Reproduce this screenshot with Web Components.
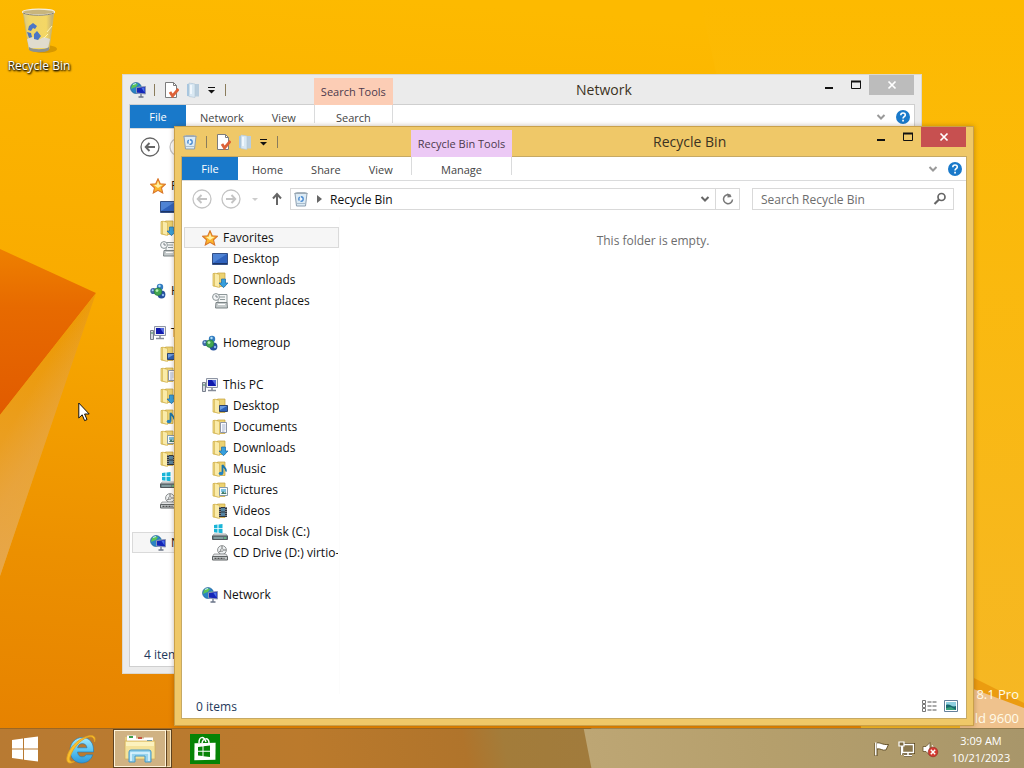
<!DOCTYPE html>
<html lang="en">
<head>
<meta charset="utf-8">
<title>Desktop</title>
<style>
    html, body {
        margin: 0;
        height: 100%;
        overflow: hidden;
    }
    body {
        font-family: "Open Sans", "Noto Sans", sans-serif;
        font-size: 12px;
        line-height: 17px;
        color: #111;
    }
    .empty {
        margin: 0;
        padding-top: 15px;
        text-align: center;
        color: #6d6d6d;
    }
</style>
</head>
<body>
<desk-top>
    <desk-shortcut icon="bin-large">Recycle Bin</desk-shortcut>

    <explorer-window style="left: 122px; top: 74px" caption="Network" icon="network" group="Search Tools"
        group-tab="Search" status="4 items" has-history>
        <button slot="tab">Network</button>
        <button slot="tab">View</button>
        <nav-tree slot="nav" selected="Network"></nav-tree>
    </explorer-window>

    <explorer-window active style="left: 174px; top: 126px" caption="Recycle Bin" icon="bin" group="Recycle Bin Tools"
        group-tab="Manage" status="0 items">
        <button slot="tab">Home</button>
        <button slot="tab">Share</button>
        <button slot="tab">View</button>
        <nav-tree slot="nav" selected="Favorites"></nav-tree>
        <p class="empty">This folder is empty.</p>
    </explorer-window>

    <task-bar slot="taskbar" time="3:09 AM" date="10/21/2023"></task-bar>
</desk-top>

<script>
const folder = `
    <path d="M1 1.500h5.500v13.500L1 14z" fill="#f3dc86" stroke="#c9a93f" stroke-width=".7"/>
    <path d="M5.500 1h7.500v13.500H5.500z" fill="#ecd272" stroke="#c4a03a" stroke-width=".7"/>
    <path d="M2.500 1l5 1.500v13l-5-1.500z" fill="#faeba8" stroke="#d0ae4c" stroke-width=".6"/>`;

const sheet = `
    <path d="M2.500 .5h8l3 3v12h-11z" fill="#fff" stroke="#7c7c7c"/>
    <path d="M10.500 .5v3h3" fill="none" stroke="#7c7c7c"/>
    <path d="M7 10l2.500 4 6-7" fill="none" stroke="#dd6138" stroke-width="2.800"/>`;

// name: [width, height, viewBox, markup]
const ICONS = {
    "network": [16, 16, "0 0 16 16", `
        <circle cx="6" cy="6" r="5.500" fill="#2b83c4" stroke="#1a5a94" stroke-width=".6"/>
        <path d="M2 3c2-2 4-2 6-1L6 5 3 6 1 7zM7 6l3-2 1 3-3 3-2 1z" fill="#5cc455"/>
        <path d="M3 2.500l3-1" stroke="#bfe9ff" stroke-width="1.200"/>
        <path d="M6.500 5.500l9-1v7.500l-9-1z" fill="#1426b8" stroke="#8d97b5"/>
        <path d="M11.500 6l3-.5v5z" fill="#4d73ea"/>
        <path d="M11 12v2.500M8.500 15h5" stroke="#6a7488" stroke-width="1.300"/>`],
    "star": [16, 16, "0 0 16 16", `
        <path d="M8 .8l2.200 4.900 5.200.5-3.900 3.600 1.200 5.200L8 12.300 3.300 15l1.200-5.200L.6 6.200l5.200-.5z" fill="#fbb62c" stroke="#d9762a" stroke-width="1.100"/>
        <path d="M8 3l1.300 3.800 3.200.3-4.500 3-4-3 2.800-.4z" fill="#fff0a8"/>`],
    "desktop": [16, 16, "0 0 16 16", `
        <path d="M.5 2.500h15v11H.5z" fill="#2f62bd" stroke="#334f86"/>
        <path d="M1 3h14L1 12z" fill="#4f83d4"/><path d="M1 12.500h14" stroke="#1b3568"/>`],
    "downloads": [16, 16, "0 0 16 16", folder + `
        <path d="M9.500 7h4v4H16l-4.500 4.700L7 11h2.500z" fill="#369fdc" stroke="#1c6aab" stroke-width=".7"/>`],
    "recent": [16, 16, "0 0 16 16", `
        <path d="M6 1.500h9v9H6z" fill="#f4f6f6" stroke="#8d9799"/>
        <path d="M8 4h5M8 6.500h5" stroke="#8e999b"/>
        <circle cx="4" cy="4" r="3.400" fill="#f5f7f8" stroke="#8b9496"/>
        <path d="M4 2v2h2" fill="none" stroke="#616b70" stroke-width=".8"/>
        <path d="M4 9.500h11l.5 5.500h-12z" fill="#c5cbcc" stroke="#7d8587"/>
        <path d="M6 11.500h7" stroke="#fff"/>`],
    "homegroup": [16, 16, "0 0 16 16", `
        <circle cx="10" cy="4" r="3.200" fill="#327cc1"/><circle cx="3.400" cy="8" r="3.100" fill="#4169a7"/>
        <circle cx="11.500" cy="11.500" r="3.900" fill="#244f9c"/>
        <circle cx="8" cy="8.700" r="3.800" fill="#43a650" stroke="#267b40" stroke-width=".7"/>
        <circle cx="7" cy="7.600" r="1.400" fill="#baf1b5"/><circle cx="9.500" cy="3" r="1.200" fill="#b3e0f5"/>
        <circle cx="2.700" cy="7.200" r="1" fill="#a9d4f4"/><circle cx="13" cy="12" r="1.200" fill="#8cb8ef"/>`],
    "pc": [16, 16, "0 0 16 16", `
        <path d="M.5 5.500h3v9h-3z" fill="#d5d9de" stroke="#787f8c"/><path d="M2 7v2" stroke="#3e885a"/>
        <path d="M4.500 1.500h11v9h-11z" fill="#eef0f4" stroke="#8e95a4"/>
        <path d="M6 3h8v6H6z" fill="#1019ad"/><path d="M10 3h4v6z" fill="#5268dd"/>
        <path d="M10 11v2M6 13.500h8" stroke="#858b99" stroke-width="1.500"/>`],
    "folder-desktop": [16, 16, "0 0 16 16", folder + `
        <path d="M7.500 7.500h8v6h-8z" fill="#2d61b9" stroke="#2e4570"/><path d="M8 8h7l-7 4z" fill="#6d9ce0"/>`],
    "documents": [16, 16, "0 0 16 16", folder + `
        <path d="M8.500 3.500h6v10h-6z" fill="#fcfcff" stroke="#8f97a8"/>
        <path d="M10 6h3.500M10 8h3.500M10 10h3.500M10 12h2.500" stroke="#8da0c0" stroke-width=".8"/>`],
    "music": [16, 16, "0 0 16 16", folder + `
        <path d="M10.500 12V4c1 2 4 3 3.500 6.500" fill="none" stroke="#1874ad" stroke-width="1.800"/>
        <ellipse cx="9" cy="12.500" rx="2.300" ry="1.800" fill="#2584c3"/>`],
    "pictures": [16, 16, "0 0 16 16", folder + `
        <path d="M7.500 5.500h8v8h-8z" fill="#f7fbfd" stroke="#889aa8"/>
        <path d="M9 7h5v3H9z" fill="#7cc1e2"/><path d="M9 12l2-3 1.500 2 1-1 1 2z" fill="#3e7d6c"/>`],
    "videos": [16, 16, "0 0 16 16", folder + `
        <path d="M7 4h8v10H7z" fill="#30343b"/><path d="M9 5h4v3.500H9zM9 9.500h4V13H9z" fill="#5585a3"/>
        <path d="M8 4v10M14 4v10" stroke="#ddd" stroke-width=".9" stroke-dasharray="1 1"/>`],
    "disk": [16, 16, "0 0 16 16", `
        <path d="M2 1l3.500-.5v3.700H2zM6.500.4l4-.4v4.200h-4zM2 5h3.500v3.700L2 8.300zM6.500 5h4v4.300l-4-.5z" fill="#19b5d8"/>
        <path d="M2 10h12l1.500 2H.5z" fill="#dde2e3" stroke="#899194" stroke-width=".7"/>
        <path d="M.5 12h15v3.500H.5z" fill="#668185" stroke="#50575c"/><path d="M2 14h9" stroke="#9fb6b9"/><path d="M12 14h2" stroke="#67e17b"/>`],
    "cd": [16, 16, "0 0 16 16", `
        <circle cx="10" cy="5" r="4.400" fill="#edf0f1" stroke="#8d9192"/><circle cx="10" cy="5" r="1.400" fill="#fff" stroke="#8d9192"/>
        <path d="M10 1v2M7 7l2-1M12 5h2" stroke="#777"/>
        <path d="M2 9h12l1.500 2.500H.5z" fill="#e2e4e5" stroke="#7d8082" stroke-width=".7"/>
        <path d="M.5 11.500h15v3.500H.5z" fill="#c3c7c8" stroke="#5f6364"/><path d="M2.500 13.300h10" stroke="#333" stroke-dasharray="2 1"/>`],
    "bin": [16, 16, "0 0 16 16", `
        <path d="M2 2.500h12L12.500 15h-9z" fill="#dcebf5" stroke="#8d9fb0"/>
        <path d="M1.500 2.500l2-1h9l2 1z" fill="#f7fafc" stroke="#93a1ac" stroke-width=".8"/>
        <circle cx="8" cy="8" r="2.200" fill="#eef6fc" stroke="#4a8bd2" stroke-width="1.400" stroke-dasharray="3.600 1"/>
        <path d="M4 12.500h8" stroke="#aabdcc"/>`],
    "sheet": [16, 16, "0 0 16 16", sheet],
    "new-folder": [16, 16, "0 0 16 16", `
        <path d="M2 2l6-.5v13L2 14z" fill="#a7c6e0"/><path d="M8 2h6v12.500H8z" fill="#b9cddd"/>
        <path d="M4 1l6 1v13.500l-6-1z" fill="#d9e8f3" stroke="#b4c6d5" stroke-width=".6"/><path d="M6 3v9" stroke="#f7fbff" stroke-width="1.600"/>`],
    "customize": [8, 8, "0 0 8 8", `<path d="M0 1.500h7" stroke="#111"/><path d="M0 4h7L3.500 7.500z" fill="#111"/>`],
    "minimize": [10, 10, "0 0 10 10", `<path d="M1 8h8" stroke="#111" stroke-width="2"/>`],
    "maximize": [10, 10, "0 0 10 10", `<path d="M.5 1.500h9v7h-9z" fill="none" stroke="#111"/><path d="M0 1.500h10" stroke="#111" stroke-width="2"/>`],
    "close": [10, 10, "0 0 10 10", `<path d="M1.500 1.500l7 7M8.500 1.500l-7 7" stroke="#fff" stroke-width="1.700"/>`],
    "chevron": [10, 8, "0 0 10 8", `<path d="M1.500 2L5 5.500 8.500 2" fill="none" stroke="currentColor" stroke-width="2"/>`],
    "help": [14, 14, "0 0 14 14", `<circle cx="7" cy="7" r="7" fill="#1979ca"/>
        <path d="M4.800 5.200C4.800 2.300 9.300 2.300 9.300 5c0 1.700-2.300 1.700-2.300 3.600" fill="none" stroke="#fff" stroke-width="1.600"/><path d="M6.200 9.800h1.700v1.700H6.200z" fill="#fff"/>`],
    "back": [20, 20, "0 0 20 20", `<circle cx="10" cy="10" r="9" fill="none" stroke="currentColor" stroke-width="1.300"/>
        <path d="M15 10H6M9.500 6L5.700 10l3.800 4" fill="none" stroke="currentColor" stroke-width="1.900"/>`],
    "forward": [20, 20, "0 0 20 20", `<circle cx="10" cy="10" r="9" fill="none" stroke="currentColor" stroke-width="1.300"/>
        <path d="M5 10h9M10.500 6l3.800 4-3.800 4" fill="none" stroke="currentColor" stroke-width="1.900"/>`],
    "tick": [6, 4, "0 0 6 4", `<path d="M0 1h6L3 4z" fill="#ccc"/>`],
    "up": [12, 14, "0 0 12 14", `<path d="M6 13V2M2 6.500L6 2l4 4.500" fill="none" stroke="#666" stroke-width="2"/>`],
    "crumb": [5, 8, "0 0 5 8", `<path d="M0 0l5 4-5 4z" fill="#666"/>`],
    "refresh": [12, 12, "0 0 12 12", `<path d="M8.800 2.700A4.500 4.500 0 1 0 10.500 6.500" fill="none" stroke="#777" stroke-width="1.500"/><path d="M5.500 0v4.500L9.800 4z" fill="#777"/>`],
    "search": [14, 14, "0 0 14 14", `<circle cx="8.500" cy="5" r="3.500" fill="none" stroke="#666" stroke-width="1.700"/><path d="M6 7.500L1.500 12" stroke="#666" stroke-width="2.200"/>`],
    "details": [16, 14, "0 0 16 14", `
        <path d="M1.500 1.500h3v3h-3zM1.500 5.500h3v3h-3zM1.500 9.500h3v3h-3z" fill="#fff" stroke="#777"/>
        <path d="M6.500 3h4M11.500 3h4M6.500 7h4M11.500 7h4M6.500 11h4M11.500 11h4" stroke="#555"/>`],
    "thumbs": [14, 12, "0 0 14 12", `<path d="M.5.5h13v11H.5z" fill="#fff" stroke="#65809b"/>
        <path d="M2 2h10v8H2z" fill="#8fd0e0"/><path d="M2 5c4-2 6 3 10 1v4H2z" fill="#16686e"/><path d="M2 8l5-1 5 3H2z" fill="#39a27e"/>`],
    "start": [28, 26, "0 0 28 26", `<path d="M1 4l11-1.500v10H1zM13 2.300L27 .500v12H13zM1 13.500h11v10L1 22zM13 13.500h14v12l-14-1.800z" fill="#fff"/>`],
    "ie": [32, 32, "0 0 32 32", `
        <defs><linearGradient id="e" x2="0" y2="1"><stop stop-color="#a4e9ff"/><stop offset=".5" stop-color="#5cc6f3"/><stop offset="1" stop-color="#2f98d8"/></linearGradient></defs>
        <path d="M28.500 19H12.500c.3 3.200 2.200 4.800 4.600 4.800 2 0 3.200-.8 4-2h6.600c-1.500 5-5.700 8.200-10.900 8.200C10.200 30 5 25 5 17.500S10.500 4.500 17.200 4.500c7.300 0 12 5.500 11.300 14.500zM12.600 14.800h9.400c-.3-2.700-2.300-4.200-4.700-4.200s-4.100 1.500-4.700 4.200z" fill="url(#e)" stroke="#1f78b8" stroke-width=".6"/>
        <path d="M29.500 9c2-5-1-8-8-5.500C12 6.500 3.500 16 2 24c-1 5.500 2 8 7.500 4.500-4 1-5.500-1-4.500-4.500C8 15 15 7.500 22 4.500c4-1.700 7.500-.5 7.500 4.500z" fill="#fbc02c" stroke="#e0a020" stroke-width=".8"/>`],
    "explorer": [32, 30, "0 0 32 30", `
        <path d="M1 3h8l1 3h20v16H1z" fill="#e6cd7e"/>
        <path d="M3 1.500h9v3h8v-1h9v5H3z" fill="#fff"/>
        <path d="M5 2h4v2H5z" fill="#399f4b"/><path d="M14 3h4v2h-4z" fill="#c75843"/><path d="M23 6h5v2h-5z" fill="#4491c9"/>
        <path d="M1 7h30v18H1z" fill="#f4e29a" stroke="#d1ae58" stroke-width=".7"/><path d="M2 8h28v4H2z" fill="#fcf2be"/>
        <path d="M5 28V18q0-2 2-2h18q2 0 2 2v10h-6v-6H11v6z" fill="#97d3ee" stroke="#4798c4"/>
        <path d="M7 27v-8h18v8" fill="none" stroke="#e2f6ff" stroke-width="1.500"/>`],
    "store": [30, 30, "0 0 30 30", `<path d="M0 0h30v30H0z" fill="#068306"/>
        <path d="M4 10l21-2 1 17-21 2z" fill="#fff" transform="rotate(4 15 17)"/>
        <path d="M9 9c0-7 5-7 7-1M12 9c1-5 7-6 7 0" fill="none" stroke="#fff" stroke-width="1.500"/>
        <path d="M8 13l4.500-.6v4.300H8zM13.500 12.300L20 11.500v5.200h-6.500zM8 17.700h4.500V22L8 21.400zM13.500 17.700H20V23l-6.500-.8z" fill="#068306"/>`],
    "flag": [18, 18, "0 0 18 18", `<path d="M3 3v13" stroke="#59451c" stroke-width="3"/>
        <path d="M3.500 3c4-1 5 2 12 1.500L13 10C9 11 8 8 3.500 9z" fill="#fff" stroke="#59451c" stroke-width=".9"/><path d="M2.800 2.500v13" stroke="#fff" stroke-width="1.500"/>`],
    "wired": [18, 18, "0 0 18 18", `<path d="M5.500 4.500h11v8h-11zM11 13v2M7 15.500h8M4.500 6v9" fill="none" stroke="#59451c" stroke-width="3"/>
        <path d="M5.500 4.500h11v8h-11z" fill="#8a774e" stroke="#fff" stroke-width="1.400"/>
        <path d="M11 13v2M7 15.500h8" stroke="#fff" stroke-width="1.500"/>
        <path d="M2 2h5v4H2z" fill="#7b6840" stroke="#fff" stroke-width="1.200"/><path d="M4.500 6v9" stroke="#fff" stroke-width="1.600"/>`],
    "muted": [18, 18, "0 0 18 18", `<path d="M2 6.500h3l4-4v13l-4-4H2z" fill="#fff" stroke="#65512b" stroke-width=".8"/>
        <path d="M11 5c1 1 1 2 1 4" stroke="#fff" fill="none"/><circle cx="12" cy="12" r="4.800" fill="#d43a31" stroke="#8f2821" stroke-width=".6"/>
        <path d="M9.800 9.800l4.400 4.400M14.200 9.800l-4.400 4.400" stroke="#fff" stroke-width="1.500"/>`],
    "bin-large": [40, 48, "0 0 40 48", `
        <defs><linearGradient id="g"><stop stop-color="#d7c889"/><stop offset=".2" stop-color="#efd56b"/><stop offset=".75" stop-color="#f4d765"/><stop offset="1" stop-color="#b9a677"/></linearGradient></defs>
        <ellipse cx="25" cy="43" rx="13" ry="4" fill="#b17900" opacity=".5"/>
        <path d="M4 5h31l-5 38c-4 3-16 3-20 0z" fill="url(#g)" stroke="#c8b878" stroke-width=".8"/>
        <path d="M8 33l6-2 5 3 6-3 6 2-2 9H10z" fill="#dddde0" opacity=".85"/>
        <path d="M10 41c4 3 16 3 20 0v3c-4 3-16 3-20 0z" fill="#8d9290"/>
        <path d="M10 20l4-3 4 3-2 3-2-1-2 3-3-1zM8 26l4 1 1 4-3 1zM15 28l3-3 4 5-3 4-4-1z" fill="#4b76c6"/>
        <path d="M28 26l5-6M25 32l4-4" stroke="#fff3b4"/>
        <ellipse cx="19.500" cy="6" rx="16" ry="2.800" fill="#c8b57c" stroke="#f4efe1" stroke-width="1.200"/>
        <path d="M4 7c6 3 25 3 31 0" fill="none" stroke="#8a8370"/>`],
};

class SysIcon extends HTMLElement {
    connectedCallback() {
        const [w, h, box, markup] = ICONS[this.getAttribute("name")];
        this.attachShadow({ mode: "open" }).innerHTML = `
            <style>
                :host { display: inline-flex; flex: none; }
                svg { display: block; }
            </style>
            <svg width="${w}" height="${h}" viewBox="${box}" aria-hidden="true">${markup}</svg>
        `;
    }
}
customElements.define("sys-icon", SysIcon);

class DeskTop extends HTMLElement {
    constructor() {
        super();
        this.attachShadow({ mode: "open" }).innerHTML = `
            <style>
                :host {
                    display: flex;
                    flex-direction: column;
                    height: 100vh;
                    position: relative;
                    overflow: hidden;
                }
                .wallpaper {
                    position: absolute;
                    inset: 0;
                    width: 100%;
                    height: 100%;
                }
                main { position: relative; flex: 1; }
                .edition {
                    position: absolute;
                    right: 5px;
                    bottom: -2px;
                    font-size: 13px;
                    line-height: 24px;
                    text-align: right;
                    color: #fffbe9;
                }
                .pointer {
                    position: absolute;
                    left: 78px;
                    top: 402px;
                }
            </style>
            <svg class="wallpaper" viewBox="0 0 1024 768" preserveAspectRatio="none" aria-hidden="true">
                <defs>
                    <linearGradient id="sky" x1="0.4" y1="0" x2="0.300" y2="1">
                        <stop stop-color="#fdba00"/><stop offset=".4" stop-color="#f9ab00"/>
                        <stop offset=".75" stop-color="#ec9000"/><stop offset="1" stop-color="#e68100"/>
                    </linearGradient>
                    <linearGradient id="right" x2="0" y2="1">
                        <stop stop-color="#fdba00"/><stop offset="1" stop-color="#f5b727"/>
                    </linearGradient>
                    <linearGradient id="fold" x2="0" y2="1">
                        <stop stop-color="#ee8000"/><stop offset=".35" stop-color="#e76a00"/><stop offset="1" stop-color="#e15b00"/>
                    </linearGradient>
                    <linearGradient id="shard" gradientUnits="userSpaceOnUse" x1="20" y1="410" x2="72" y2="440">
                        <stop stop-color="#ed9900"/><stop offset=".55" stop-color="#eaa32c"/><stop offset="1" stop-color="#edaa28"/>
                    </linearGradient>
                    <linearGradient id="low" x2="0" y2="1">
                        <stop stop-color="#eaa030" stop-opacity="0"/><stop offset="1" stop-color="#e6a64c"/>
                    </linearGradient>
                </defs>
                <path d="M0 0h1024v768H0z" fill="url(#sky)"/>
                <path d="M700 0h324v768H870z" fill="url(#right)"/>
                <path d="M0 249L96 293 0 415z" fill="url(#fold)"/>
                <path d="M96 293L0 415v161z" fill="url(#shard)"/>
                <path d="M96 293L0 415v161z" fill="url(#low)"/>
                <path d="M960 671l64 32v18l-64-28z" fill="#eb9c10"/>
                <path d="M960 684l64 24v60h-64z" fill="#efc28d"/>
            </svg>
            <main>
                <div class="edition">Windows 8.1 Pro<br>Build 9600</div>
                <slot></slot>
            </main>
            <slot name="taskbar"></slot>
            <svg class="pointer" width="13" height="21" viewBox="0 0 13 21" aria-hidden="true">
                <path d="M.8 1v15l3.400-3.200 2.400 5.800 2.400-1-2.400-5.600h4.600z" fill="#fff" stroke="#111"/>
            </svg>
        `;
    }
}
customElements.define("desk-top", DeskTop);

class DeskShortcut extends HTMLElement {
    constructor() {
        super();
        this.attachShadow({ mode: "open" }).innerHTML = `
            <style>
                :host { display: block; width: 78px; padding-top: 6px; }
                a {
                    display: flex;
                    flex-direction: column;
                    align-items: center;
                    gap: 3px;
                    color: #fff;
                    text-decoration: none;
                    white-space: nowrap;
                    text-shadow: 1px 1px 2px #000, 0 1px 2px #000;
                }
            </style>
            <a href="#"><sys-icon name="${this.getAttribute("icon")}"></sys-icon><slot></slot></a>
        `;
    }
}
customElements.define("desk-shortcut", DeskShortcut);

class NavItem extends HTMLElement {
    constructor() {
        super();
        this.attachShadow({ mode: "open" });
    }

    connectedCallback() {
        this.shadowRoot.innerHTML = `
            <style>
                :host { display: block; }
                :host([root]:not(:first-child)) { margin-top: 21px; }
                a {
                    display: flex;
                    align-items: center;
                    gap: 5px;
                    box-sizing: border-box;
                    height: 21px;
                    padding-left: 27px;
                    border: 1px solid transparent;
                    overflow: hidden;
                    white-space: nowrap;
                    color: inherit;
                    text-decoration: none;
                }
                :host([root]) a { padding-left: 17px; }
                :host([selected]) a { background: #f6f6f6; border-color: #dadada; }
            </style>
            <a href="#"><sys-icon name="${this.getAttribute("icon")}"></sys-icon><slot></slot></a>
        `;
    }
}
customElements.define("nav-item", NavItem);

class NavTree extends HTMLElement {
    connectedCallback() {
        // [icon, label, root]
        const items = [
            ["star", "Favorites", true],
            ["desktop", "Desktop"],
            ["downloads", "Downloads"],
            ["recent", "Recent places"],
            ["homegroup", "Homegroup", true],
            ["pc", "This PC", true],
            ["folder-desktop", "Desktop"],
            ["documents", "Documents"],
            ["downloads", "Downloads"],
            ["music", "Music"],
            ["pictures", "Pictures"],
            ["videos", "Videos"],
            ["disk", "Local Disk (C:)"],
            ["cd", "CD Drive (D:) virtio-win"],
            ["network", "Network", true],
        ];
        const selected = this.getAttribute("selected");
        this.attachShadow({ mode: "open" }).innerHTML = `
            <style>
                :host { display: block; }
                nav { padding: 10px 0 0 2px; }
            </style>
            <nav>
                ${items.map(([icon, label, root]) => `<nav-item icon="${icon}" ${root ? "root" : ""} ${label === selected ? "selected" : ""}>${label}</nav-item>`).join("")}
            </nav>
        `;
    }
}
customElements.define("nav-tree", NavTree);

class ExplorerWindow extends HTMLElement {
    constructor() {
        super();
        this.attachShadow({ mode: "open" });
    }

    connectedCallback() {
        const caption = this.getAttribute("caption");
        const icon = this.getAttribute("icon");
        this.shadowRoot.innerHTML = `
            <style>
                :host {
                    --frame: #ebebeb;
                    --edge: #dcd8cf;
                    --line: #cfcfcf;
                    --group: #fccdb5;
                    --close: #bcbcbc;
                    position: absolute;
                    box-sizing: border-box;
                    display: flex;
                    width: 800px;
                    height: 600px;
                    padding: 0 7px 7px;
                    border: 1px solid var(--edge);
                    background: var(--frame);
                }
                :host([active]) {
                    --frame: #efc868;
                    --edge: #c9a04a;
                    --line: #c6a964;
                    --group: #ecc9f5;
                    --close: #c75050;
                    box-shadow: 0 0 5px rgba(90, 50, 0, 0.35);
                }
                button {
                    display: flex;
                    align-items: center;
                    justify-content: center;
                    padding: 0;
                    border: 0;
                    background: none;
                    font: inherit;
                    color: inherit;
                }
                .client {
                    flex: 1;
                    min-width: 0;
                    display: flex;
                    flex-direction: column;
                    position: relative;
                    isolation: isolate;
                }
                .client::before {
                    content: "";
                    position: absolute;
                    z-index: -1;
                    inset: 29px -1px -1px;
                    border: 1px solid var(--line);
                    background: #fff;
                }
                header {
                    display: grid;
                    grid-template-columns: auto auto 1fr;
                    grid-template-rows: 30px 24px;
                    font-size: 11px;
                }
                .quick { display: flex; align-items: center; }
                .quick > sys-icon { margin-right: 3px; }
                .quick i { width: 1px; height: 12px; background: #8a7c5c; margin: 0 5px; }
                .quick button { width: 22px; height: 22px; }
                .quick .custom { width: 16px; }
                .group {
                    margin-top: 3px;
                    display: flex;
                    align-items: center;
                    justify-content: center;
                    padding: 0 7px;
                    background: var(--group);
                    color: #4c3a4d;
                    white-space: nowrap;
                }
                .caption { display: flex; align-items: flex-start; }
                h1 {
                    flex: 1;
                    margin: 0;
                    font-size: 14px;
                    line-height: 30px;
                    font-weight: normal;
                    text-align: center;
                    color: #3b3222;
                }
                .caption button { width: 27px; height: 20px; }
                .caption .close { width: 45px; background: var(--close); }
                .tabs, .group-tab, .ribbon-tools {
                    display: flex;
                    border-bottom: 1px solid #dadbdc;
                    color: #444;
                }
                .tabs { padding-right: 4px; }
                .tabs .file { width: 56px; background: #1979ca; color: #fff; }
                ::slotted(button) {
                    border: 0;
                    padding: 2px 14px 0;
                    background: none;
                    font: inherit;
                    color: #444;
                }
                .group-tab button { flex: 1; padding-top: 2px; }
                .group-tab::before, .group-tab::after {
                    content: "";
                    width: 1px;
                    height: 18px;
                    background: #dadbdc;
                }
                .ribbon-tools {
                    align-items: center;
                    justify-content: flex-end;
                    gap: 10px;
                    padding-right: 4px;
                    color: #999;
                }
                .toolbar {
                    display: flex;
                    align-items: center;
                    height: 36px;
                    padding: 0 12px 0 10px;
                }
                .history { gap: 9px; display: flex; color: #c4c4c4; }
                :host([has-history]) .back { color: #666; }
                .places { width: 27px; height: 22px; }
                .parent { width: 18px; height: 22px; margin-right: 4px; }
                .address, .search {
                    display: flex;
                    align-items: center;
                    box-sizing: border-box;
                    height: 22px;
                    border: 1px solid #d9d9d9;
                }
                .address { flex: 1; margin-right: 12px; padding-left: 2px; color: #666; }
                .address .crumb { gap: 8px; color: #111; }
                .address .drop { margin-left: auto; width: 20px; height: 20px; }
                .address .reload { width: 24px; height: 20px; border-left: 1px solid #d9d9d9; }
                .search { width: 202px; padding: 0 6px 0 8px; }
                input {
                    flex: 1;
                    min-width: 0;
                    border: 0;
                    padding: 0;
                    outline: 0;
                    background: none;
                    font: inherit;
                }
                input::placeholder { color: #6d6d6d; opacity: 1; }
                .body { flex: 1; min-height: 0; display: flex; }
                aside { width: 157px; border-right: 1px solid #fcfcfc; }
                section { flex: 1; min-width: 0; }
                footer {
                    display: flex;
                    align-items: center;
                    gap: 6px;
                    height: 24px;
                    padding: 0 7px 0 14px;
                    color: #1e395b;
                }
                footer span { flex: 1; }
                footer button { width: 16px; height: 16px; }
            </style>
            <div class="client">
                <header>
                    <div class="quick">
                        <sys-icon name="${icon}"></sys-icon><i></i>
                        <button aria-label="Properties"><sys-icon name="sheet"></sys-icon></button>
                        <button aria-label="New folder"><sys-icon name="new-folder"></sys-icon></button>
                        <button class="custom" aria-label="Customize"><sys-icon name="customize"></sys-icon></button><i></i>
                    </div>
                    <div class="group">${this.getAttribute("group")}</div>
                    <div class="caption">
                        <h1>${caption}</h1>
                        <button aria-label="Minimize"><sys-icon name="minimize"></sys-icon></button>
                        <button aria-label="Maximize"><sys-icon name="maximize"></sys-icon></button>
                        <button class="close" aria-label="Close"><sys-icon name="close"></sys-icon></button>
                    </div>
                    <div class="tabs">
                        <button class="file">File</button>
                        <slot name="tab"></slot>
                    </div>
                    <div class="group-tab"><button>${this.getAttribute("group-tab")}</button></div>
                    <div class="ribbon-tools">
                        <button aria-label="Expand ribbon"><sys-icon name="chevron"></sys-icon></button>
                        <button aria-label="Help"><sys-icon name="help"></sys-icon></button>
                    </div>
                </header>
                <div class="toolbar">
                    <div class="history">
                        <button class="back" aria-label="Back"><sys-icon name="back"></sys-icon></button>
                        <button aria-label="Forward"><sys-icon name="forward"></sys-icon></button>
                    </div>
                    <button class="places" aria-label="Recent locations"><sys-icon name="tick"></sys-icon></button>
                    <button class="parent" aria-label="Up"><sys-icon name="up"></sys-icon></button>
                    <div class="address">
                        <button class="crumb">
                            <sys-icon name="${icon}"></sys-icon><sys-icon name="crumb"></sys-icon>${caption}
                        </button>
                        <button class="drop" aria-label="Previous locations"><sys-icon name="chevron"></sys-icon></button>
                        <button class="reload" aria-label="Refresh"><sys-icon name="refresh"></sys-icon></button>
                    </div>
                    <label class="search">
                        <input type="search" placeholder="Search ${caption}" aria-label="Search ${caption}">
                        <sys-icon name="search"></sys-icon>
                    </label>
                </div>
                <div class="body">
                    <aside><slot name="nav"></slot></aside>
                    <section><slot></slot></section>
                </div>
                <footer>
                    <span>${this.getAttribute("status")}</span>
                    <button aria-label="Details view"><sys-icon name="details"></sys-icon></button>
                    <button aria-label="Large icons view"><sys-icon name="thumbs"></sys-icon></button>
                </footer>
            </div>
        `;
    }
}
customElements.define("explorer-window", ExplorerWindow);

class TaskBar extends HTMLElement {
    connectedCallback() {
        this.attachShadow({ mode: "open" }).innerHTML = `
            <style>
                :host {
                    display: flex;
                    align-items: center;
                    position: relative;
                    box-sizing: border-box;
                    height: 40px;
                    border-top: 1px solid rgba(90, 60, 10, 0.3);
                    background: linear-gradient(79deg, #b87a32 0, #bb7a2c 300px, #b0742b 460px, #a37c3a 500px, #a17b3c 580px, #bda674 581px, #b59f6c 760px, #a8966a 100%);
                    color: #fff;
                }
                button {
                    display: flex;
                    align-items: center;
                    justify-content: center;
                    height: 39px;
                    padding: 0;
                    border: 0;
                    background: none;
                    color: inherit;
                    font: inherit;
                }
                .start { width: 50px; }
                .app { width: 62px; }
                .open {
                    box-sizing: border-box;
                    width: 59px;
                    margin: 0 2px 0 1px;
                    border: 1px solid #5e4220;
                    background: #c8a46c;
                }
                .open span {
                    flex: 1;
                    align-self: stretch;
                    display: flex;
                    align-items: center;
                    justify-content: center;
                    border: 1px solid #fff3d8;
                    background: #d0b283;
                }
                .open i {
                    align-self: stretch;
                    width: 3px;
                    border: solid #f4dfb5;
                    border-width: 1px 1px 1px 0;
                    border-left: 1px solid #5e4220;
                }
                .tray { margin-left: auto; display: flex; }
                .tray button { width: 24px; }
                .clock {
                    width: 82px;
                    padding-right: 4px;
                    flex-direction: column;
                    font-size: 11px;
                }
            </style>
            <button class="start" aria-label="Start"><sys-icon name="start"></sys-icon></button>
            <button class="app" aria-label="Internet Explorer"><sys-icon name="ie"></sys-icon></button>
            <button class="open" aria-label="File Explorer"><span><sys-icon name="explorer"></sys-icon></span><i></i></button>
            <button class="app" aria-label="Store"><sys-icon name="store"></sys-icon></button>
            <div class="tray">
                <button aria-label="Action Center"><sys-icon name="flag"></sys-icon></button>
                <button aria-label="Network"><sys-icon name="wired"></sys-icon></button>
                <button aria-label="Volume"><sys-icon name="muted"></sys-icon></button>
            </div>
            <button class="clock"><time>${this.getAttribute("time")}</time><time>${this.getAttribute("date")}</time></button>
        `;
    }
}
customElements.define("task-bar", TaskBar);
</script>
</body>
</html>
